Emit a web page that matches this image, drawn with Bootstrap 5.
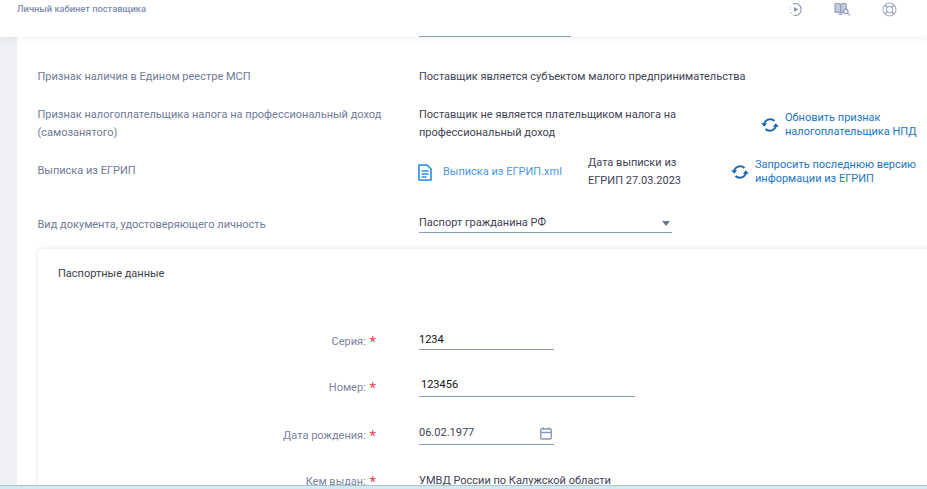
<!DOCTYPE html>
<html lang="ru"><head><meta charset="utf-8"><title>Личный кабинет поставщика</title>
<link href="https://cdn.jsdelivr.net/npm/bootstrap@5.3.0/dist/css/bootstrap.min.css" rel="stylesheet">
<style>
html,body{height:489px;overflow:hidden;background:#fff;font-family:Roboto,"Liberation Sans",sans-serif;font-size:11px;color:#3f4254}
.shell{height:489px;overflow:hidden;position:relative}
.topbar{height:37px;background:#fff;box-shadow:0 2px 6px rgba(60,70,100,.07);position:relative;z-index:2;padding:3px 0 0 17px}
.crumb{font-size:9.3px;font-weight:500;color:#7f8cae;line-height:12px}
.tools{gap:31px;padding-right:30px;margin-top:-1px}
.under-top{position:absolute;left:419px;width:152px;top:36px;height:1px;background:#8fa0c2;z-index:3}
.strip{width:17px;flex:none;background:#eef0f3}
.main{padding:31px 0 0 21px;flex:1;min-width:0}
.lbl{width:381px;flex:none;color:#6f7a96;line-height:18px;margin-left:-.5px;margin-right:.5px}
.val{color:#3f4254;line-height:18px}
.r1{height:38px}
.r2{height:56px}
.r3{height:47px}
.r4{height:31px;padding-top:7px}
.npd{width:268px;flex:none}
.lnk{color:#1b76c4;line-height:14px;text-decoration:none;white-space:nowrap}
.lnk1{margin-left:74px;margin-top:5px;gap:6px;height:28px}
.lnk2{gap:6px;margin-top:-4px;height:28px}
.file{color:#4a98e3;text-decoration:none;gap:11px;width:169px;flex:none;line-height:18px;margin-top:1px;height:18px}
.fileico{margin-left:-1px}
.dt{width:143px;flex:none;line-height:18px;margin-top:-8px;padding-right:30px}
.sel{width:253px;height:28px;border-bottom:1px solid #8c9aba;padding:9px 2px 0 0;color:#3f4254;margin-top:-11px}
.caret{width:0;height:0;border-left:4.5px solid transparent;border-right:4.5px solid transparent;border-top:5px solid #6d7790}
.panel{margin-top:9px;width:1000px;height:400px;border-radius:4px 0 0 0;box-shadow:0 0 5px rgba(60,70,100,.16);padding:16px 0 0 20px;background:#fff}
.ptitle{color:#3b3f4a;line-height:18px;height:68px}
.frow{margin-left:-20px}
.flabel{width:346px;flex:none;text-align:right;color:#7a84a0;line-height:18px;padding-right:8px}
.req{color:#e8464f;font-size:15px;line-height:12px;margin-left:1px;display:inline-block;vertical-align:-2px}
.fld{margin-left:35px;border-bottom:1px solid #8c9aba;color:#111;line-height:18px}
.w134{width:135px}.w216{width:216px}
.f1{height:46px}.f1 .fld{height:19px;margin-top:-2px}
.f2{height:48px}.f2 .fld{height:21px;margin-top:-3px;padding-left:2px}
.f3{height:46px}.f3 .fld{height:21px;margin-top:-3px;color:#3f4254;padding-right:2px}
.plain{margin-left:35px;margin-top:-1px;color:#3f4254;line-height:18px}
.footline{position:absolute;left:0;right:0;bottom:0;height:4px;background:#d3e9f1;border-top:1px solid #a9c6cc;z-index:5}
</style></head>
<body>
<div class="shell d-flex flex-column">
  <header class="topbar d-flex justify-content-between align-items-start flex-shrink-0">
    <div class="crumb">Личный кабинет поставщика</div>
    <div class="tools d-flex align-items-center">
      <svg width="15" height="15" viewBox="0 0 16 16" fill="none" stroke="#8a97b8" stroke-width="1.2"><path d="M5 2.2A6.4 6.4 0 1 1 6 14.2" /><path d="M1.7 8h.9M2.2 5.2l.7.4M2.6 11.2l.7-.5M3.8 13l.5-.6" /><path d="M6.4 5.2v5.6l4.6-2.8z" fill="#8a97b8" stroke="none"/></svg>
      <svg width="17" height="15" viewBox="0 0 18 16" fill="none" stroke="#8a97b8" stroke-width="1.1"><path d="M1 2.2c2-.8 4-.8 6 .3 2-1.100 4-1.100 6-.3v8.600H1z" fill="#c4cde0"/><path d="M7 2.500v9"/><path d="M5 13h4" stroke-width="1.500"/><circle cx="12.500" cy="10" r="2.400" fill="#fff"/><path d="M14.300 11.800l2.500 2.500"/></svg>
      <svg width="15" height="15" viewBox="0 0 16 16" fill="none" stroke="#a3aec8" stroke-width="1.200"><circle cx="8" cy="8" r="6.900"/><circle cx="8" cy="8" r="3.400"/><path d="M3.300 3.300l2.400 2.400M12.700 3.300l-2.400 2.400M3.300 12.700l2.400-2.400M12.700 12.700l-2.400-2.400" stroke-width="1.800"/></svg>
    </div>
  </header>
  <div class="under-top"></div>
  <div class="d-flex flex-grow-1 overflow-hidden">
    <div class="strip"></div>
    <main class="main">
      <div class="d-flex r1">
        <div class="lbl">Признак наличия в Едином реестре МСП</div>
        <div class="val">Поставщик является субъектом малого предпринимательства</div>
      </div>
      <div class="d-flex r2">
        <div class="lbl">Признак налогоплательщика налога на профессиональный доход (самозанятого)</div>
        <div class="val npd">Поставщик не является плательщиком налога на профессиональный доход</div>
        <a class="lnk lnk1 d-flex align-items-center" href="#">
          <svg width="18" height="16" viewBox="0 0 18 16" fill="none" stroke="#1668b5" stroke-width="1.900"><path d="M3.200 7.500A6 5.500 0 0 1 13.500 4"/><path d="M14.800 8.500A6 5.500 0 0 1 4.500 12"/><path d="M.2 6.300h6l-3 3.400zM11.800 9.700h6l-3-3.400z" fill="#1668b5" stroke="none"/></svg>
          <span>Обновить признак<br>налогоплательщика НПД</span></a>
      </div>
      <div class="d-flex r3">
        <div class="lbl">Выписка из ЕГРИП</div>
        <a class="file d-flex align-items-center" href="#">
          <svg class="fileico" width="14" height="17" viewBox="0 0 14 17" fill="none" stroke="#2b8ae6" stroke-width="1.600"><path d="M1 1h8l4 4v11H1z"/><path d="M3.500 7h7M3.500 10h7M3.500 13h5"/></svg>
          <span>Выписка из ЕГРИП.xml</span></a>
        <div class="dt">Дата выписки из ЕГРИП 27.03.2023</div>
        <a class="lnk lnk2 d-flex align-items-center" href="#">
          <svg width="18" height="16" viewBox="0 0 18 16" fill="none" stroke="#1668b5" stroke-width="1.900"><path d="M3.200 7.500A6 5.500 0 0 1 13.500 4"/><path d="M14.800 8.500A6 5.500 0 0 1 4.500 12"/><path d="M.2 6.300h6l-3 3.400zM11.800 9.700h6l-3-3.400z" fill="#1668b5" stroke="none"/></svg>
          <span>Запросить последнюю версию<br>информации из ЕГРИП</span></a>
      </div>
      <div class="d-flex r4">
        <div class="lbl">Вид документа, удостоверяющего личность</div>
        <div class="sel d-flex justify-content-between align-items-center"><span>Паспорт гражданина РФ</span><span class="caret"></span></div>
      </div>
      <section class="panel">
        <div class="ptitle">Паспортные данные</div>
        <div class="frow f1 d-flex align-items-start"><div class="flabel">Серия: <span class="req">*</span></div><div class="fld w134">1234</div></div>
        <div class="frow f2 d-flex align-items-start"><div class="flabel">Номер: <span class="req">*</span></div><div class="fld w216">123456</div></div>
        <div class="frow f3 d-flex align-items-start"><div class="flabel">Дата рождения: <span class="req">*</span></div><div class="fld w134 d-flex justify-content-between"><span>06.02.1977</span>
          <svg width="12" height="13" viewBox="0 0 12 13" fill="none" stroke="#8a97b8" stroke-width="1.300" class="mt-1"><rect x=".7" y="2" width="10.600" height="10" rx="1"/><path d="M.7 5.500h10.600M3.200.3v2M8.800.3v2"/></svg></div></div>
        <div class="frow f4 d-flex align-items-start"><div class="flabel">Кем выдан: <span class="req">*</span></div><div class="plain">УМВД России по Калужской области</div></div>
      </section>
    </main>
  </div>
  <div class="footline"></div>
</div>
<script src="https://cdn.jsdelivr.net/npm/bootstrap@5.3.0/dist/js/bootstrap.bundle.min.js"></script>
</body></html>
